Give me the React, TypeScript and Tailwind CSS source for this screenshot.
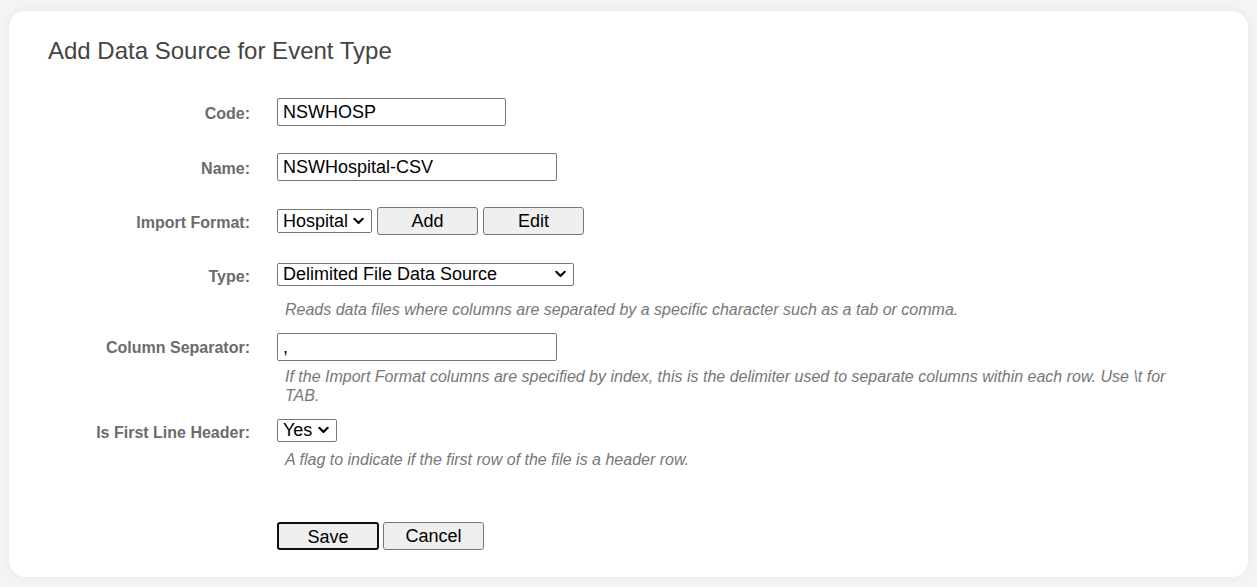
import type { ReactNode } from 'react';

const FONT = { fontFamily: '"Liberation Sans", Arial, sans-serif' };

function Row({ label, children, className = '', labelClass = 'translate-y-[2px]' }: { label: string; children: ReactNode; className?: string; labelClass?: string }) {
  return (
    <div className={`flex items-center ${className}`}>
      <div className={`w-[202px] shrink-0 text-right text-[16px] font-bold text-[#6b6b6b] ${labelClass}`}>{label}</div>
      <div className="ml-[27px] flex items-center">{children}</div>
    </div>
  );
}

function Hint({ children, className = '' }: { children: ReactNode; className?: string }) {
  return (
    <div className={`ml-[237px] text-[16px] italic leading-[19px] text-[#777] ${className}`}>{children}</div>
  );
}

function Select({ value, options, className }: { value: string; options: string[]; className: string }) {
  return (
    <div className={`relative ${className}`}>
      <select
        className="h-full w-full appearance-none rounded-[2px] border border-[#767676] bg-white pl-[5px] pr-[18px] text-[18px] leading-none text-black outline-none"
        defaultValue={value}
      >
        {options.map((o) => (
          <option key={o}>{o}</option>
        ))}
      </select>
      <svg
        className="pointer-events-none absolute right-[8px] top-1/2 -translate-y-1/2"
        width="11"
        height="7"
        viewBox="0 0 11 7"
        fill="none"
      >
        <path d="M1.3 1.3 5.5 5.5 9.7 1.3" stroke="#000" strokeWidth="2.1" strokeLinecap="round" strokeLinejoin="round" />
      </svg>
    </div>
  );
}

const inputCls = 'h-[28px] border border-[#767676] rounded-[2px] bg-white px-[5px] text-[18px] text-black outline-none';
const btnCls = 'h-[28px] border border-[#767676] rounded-[3px] bg-[#efefef] text-[18px] text-black';

export default function App() {
  return (
    <div className="min-h-[587px] bg-[#f4f4f6] pt-[11px] pb-[10px] px-[9px]" style={FONT}>
      <div className="h-[566px] rounded-2xl bg-white shadow-[0_0_10px_rgba(0,0,0,0.06)] pt-[26px] pl-[39px] pr-[48px]">
        <h2 className="text-[24px] leading-[28px] text-[#444]">Add Data Source for Event Type</h2>

        <Row label="Code:" className="mt-[33px]">
          <input className={`${inputCls} w-[229px]`} defaultValue="NSWHOSP" />
        </Row>

        <Row label="Name:" className="mt-[27px]">
          <input className={`${inputCls} w-[280px]`} defaultValue="NSWHospital-CSV" />
        </Row>

        <Row label="Import Format:" className="mt-[26px]">
          <Select value="Hospital" options={['Hospital']} className="h-[24px] w-[95px]" />
          <button className={`${btnCls} ml-[5px] w-[101px]`}>Add</button>
          <button className={`${btnCls} ml-[5px] w-[101px]`}>Edit</button>
        </Row>

        <Row label="Type:" className="mt-[27px]" labelClass="translate-y-[3px]">
          <Select value="Delimited File Data Source" options={['Delimited File Data Source']} className="h-[23px] w-[297px]" />
        </Row>
        <Hint className="mt-[14px]">
          Reads data files where columns are separated by a specific character such as a tab or comma.
        </Hint>

        <Row label="Column Separator:" className="mt-[14px]" labelClass="translate-y-[1px]">
          <input className={`${inputCls} h-[27px] w-[280px]`} defaultValue="," />
        </Row>
        <Hint className="mt-[6px]">
          If the Import Format columns are specified by index, this is the delimiter used to separate columns within each row. Use \t for TAB.
        </Hint>

        <Row label="Is First Line Header:" className="mt-[13px]" labelClass="translate-y-[3px]">
          <Select value="Yes" options={['Yes', 'No']} className="h-[23px] w-[60px]" />
        </Row>
        <Hint className="mt-[8px]">A flag to indicate if the first row of the file is a header row.</Hint>

        <div className="ml-[229px] mt-[53px] flex">
          <button className="h-[28px] w-[102px] rounded-[3px] border-2 border-[#101010] bg-[#efefef] text-[18px] text-black">Save</button>
          <button className={`${btnCls} ml-[4px] w-[101px]`}>Cancel</button>
        </div>
      </div>
    </div>
  );
}
